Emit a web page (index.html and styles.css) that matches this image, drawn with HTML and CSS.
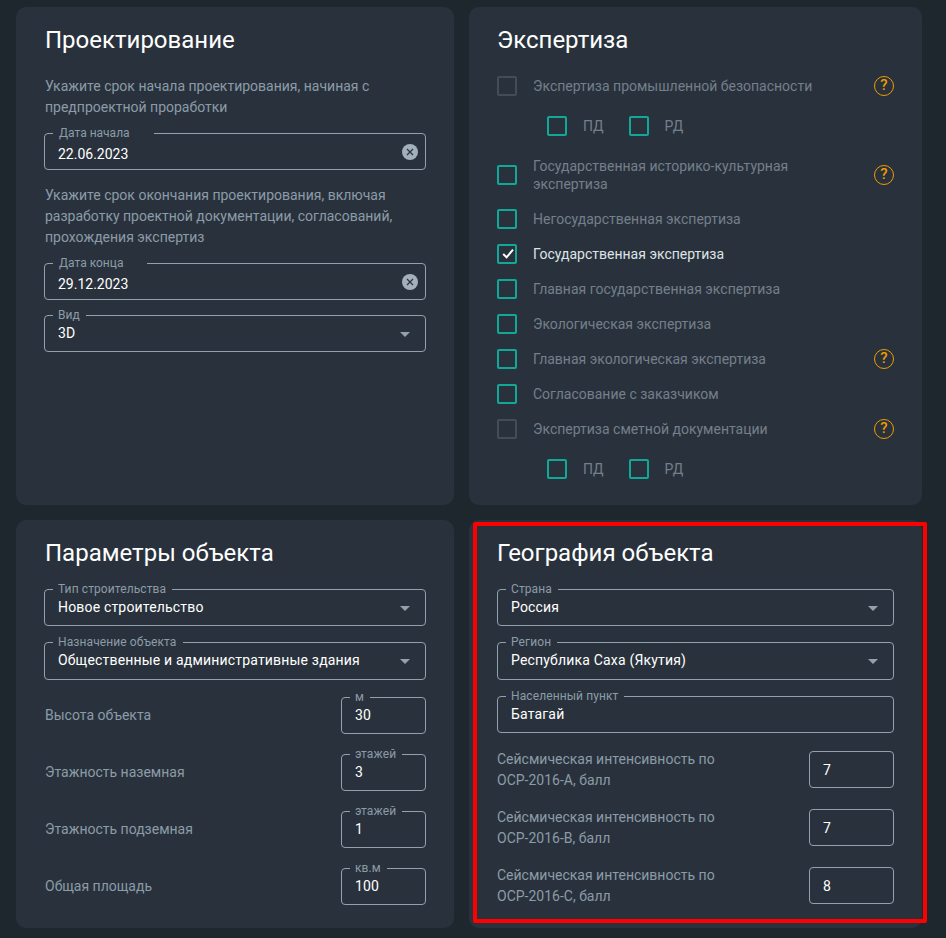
FILE: index.html
```html
<!DOCTYPE html>
<html lang="ru">
<head>
    <meta charset="UTF-8">
    <meta name="viewport" content="width=device-width, initial-scale=1.0">
    <title>Параметры проекта</title>
    <link rel="stylesheet" href="styles.css">
</head>
<body>
    <div class="page">
        <section class="card card-left">
            <h2>Проектирование</h2>
            <p class="hint hint-first">Укажите срок начала проектирования, начиная с предпроектной проработки</p>
            <fieldset class="field field-date">
                <legend>Дата начала</legend>
                <div class="value">
                    <span>22.06.2023</span>
                    <svg class="clear" width="16" height="16" viewBox="0 0 16 16"><circle cx="8" cy="8" r="8" fill="#a3b0bb"/><path d="M5 5l6 6M11 5l-6 6" stroke="#29323c" stroke-width="1.2" fill="none"/></svg>
                </div>
            </fieldset>
            <p class="hint hint-second">Укажите срок окончания проектирования, включая разработку проектной документации, согласований, прохождения экспертиз</p>
            <fieldset class="field field-date">
                <legend>Дата конца</legend>
                <div class="value">
                    <span>29.12.2023</span>
                    <svg class="clear" width="16" height="16" viewBox="0 0 16 16"><circle cx="8" cy="8" r="8" fill="#a3b0bb"/><path d="M5 5l6 6M11 5l-6 6" stroke="#29323c" stroke-width="1.2" fill="none"/></svg>
                </div>
            </fieldset>
            <fieldset class="field field-next">
                <legend>Вид</legend>
                <div class="value">
                    <span>3D</span>
                    <svg class="arrow" width="10" height="5" viewBox="0 0 10 5"><path d="M0 0h10L5 5z"/></svg>
                </div>
            </fieldset>
        </section>

        <section class="card">
            <h2>Экспертиза</h2>
            <div class="checks">
                <div class="check-row">
                    <span class="box box-off"></span>
                    <span class="check-label">Экспертиза промышленной безопасности</span>
                    <span class="help">?</span>
                </div>
                <div class="check-sub">
                    <span class="box"></span><span class="check-label">ПД</span>
                    <span class="box"></span><span class="check-label">РД</span>
                </div>
                <div class="check-row check-tall">
                    <span class="box"></span>
                    <span class="check-label">Государственная историко-культурная экспертиза</span>
                    <span class="help">?</span>
                </div>
                <div class="check-row">
                    <span class="box"></span>
                    <span class="check-label">Негосударственная экспертиза</span>
                </div>
                <div class="check-row">
                    <span class="box"><svg width="16" height="16" viewBox="0 0 16 16"><path d="M4.2 8l3.4 3.3 6.4-7.6" stroke="#fff" stroke-width="2" fill="none"/></svg></span>
                    <span class="check-label check-on">Государственная экспертиза</span>
                </div>
                <div class="check-row">
                    <span class="box"></span>
                    <span class="check-label">Главная государственная экспертиза</span>
                </div>
                <div class="check-row">
                    <span class="box"></span>
                    <span class="check-label">Экологическая экспертиза</span>
                </div>
                <div class="check-row">
                    <span class="box"></span>
                    <span class="check-label">Главная экологическая экспертиза</span>
                    <span class="help">?</span>
                </div>
                <div class="check-row">
                    <span class="box"></span>
                    <span class="check-label">Согласование с заказчиком</span>
                </div>
                <div class="check-row">
                    <span class="box box-off"></span>
                    <span class="check-label">Экспертиза сметной документации</span>
                    <span class="help">?</span>
                </div>
                <div class="check-sub">
                    <span class="box"></span><span class="check-label">ПД</span>
                    <span class="box"></span><span class="check-label">РД</span>
                </div>
            </div>
        </section>

        <section class="card card-left">
            <h2>Параметры объекта</h2>
            <fieldset class="field field-top">
                <legend>Тип строительства</legend>
                <div class="value">
                    <span>Новое строительство</span>
                    <svg class="arrow" width="10" height="5" viewBox="0 0 10 5"><path d="M0 0h10L5 5z"/></svg>
                </div>
            </fieldset>
            <fieldset class="field field-gap field-wide">
                <legend>Назначение объекта</legend>
                <div class="value">
                    <span>Общественные и административные здания</span>
                    <svg class="arrow" width="10" height="5" viewBox="0 0 10 5"><path d="M0 0h10L5 5z"/></svg>
                </div>
            </fieldset>
            <div class="params">
                <div class="param">
                    <span class="param-label">Высота объекта</span>
                    <fieldset class="field field-small"><legend>м</legend><div class="value">30</div></fieldset>
                </div>
                <div class="param">
                    <span class="param-label">Этажность наземная</span>
                    <fieldset class="field field-small"><legend>этажей</legend><div class="value">3</div></fieldset>
                </div>
                <div class="param">
                    <span class="param-label">Этажность подземная</span>
                    <fieldset class="field field-small"><legend>этажей</legend><div class="value">1</div></fieldset>
                </div>
                <div class="param">
                    <span class="param-label">Общая площадь</span>
                    <fieldset class="field field-small"><legend>кв.м</legend><div class="value">100</div></fieldset>
                </div>
            </div>
        </section>

        <section class="card card-geo">
            <h2>География объекта</h2>
            <fieldset class="field field-top">
                <legend>Страна</legend>
                <div class="value">
                    <span>Россия</span>
                    <svg class="arrow" width="10" height="5" viewBox="0 0 10 5"><path d="M0 0h10L5 5z"/></svg>
                </div>
            </fieldset>
            <fieldset class="field field-gap field-wide">
                <legend>Регион</legend>
                <div class="value">
                    <span>Республика Саха (Якутия)</span>
                    <svg class="arrow" width="10" height="5" viewBox="0 0 10 5"><path d="M0 0h10L5 5z"/></svg>
                </div>
            </fieldset>
            <fieldset class="field field-gap">
                <legend>Населенный пункт</legend>
                <div class="value">Батагай</div>
            </fieldset>
            <div class="seismic">
                <div class="seismic-row">
                    <span class="seismic-label">Сейсмическая интенсивность по ОСР-2016-А, балл</span>
                    <div class="plain-input">7</div>
                </div>
                <div class="seismic-row">
                    <span class="seismic-label">Сейсмическая интенсивность по ОСР-2016-В, балл</span>
                    <div class="plain-input">7</div>
                </div>
                <div class="seismic-row">
                    <span class="seismic-label">Сейсмическая интенсивность по ОСР-2016-С, балл</span>
                    <div class="plain-input">8</div>
                </div>
            </div>
            <div class="highlight"></div>
        </section>
    </div>
</body>
</html>
```

FILE: styles.css
```css
body {
    margin: 0;
    background: #1e272e;
    font-family: Roboto, "Liberation Sans", sans-serif;
    font-size: 14px;
    color: #fff;
}
.page {
    display: grid;
    grid-template-columns: 438px 453px;
    grid-template-rows: 498px 408px;
    gap: 15px;
    padding: 7px 24px 10px 16px;
}
.card {
    position: relative;
    padding: 18px 28px 0;
    background: #29323c;
    border-radius: 10px;
}
h2 {
    margin: 0;
    padding-top: 2px;
    font-size: 24px;
    font-weight: 400;
    line-height: 26px;
}
.card-left h2,
.card-left .hint,
.card-left .param-label {
    margin-left: 1px;
}
.hint {
    margin: 0;
    color: #8c9ba8;
    line-height: 21px;
}
.card-left .hint-first {
    margin-top: 23px;
    margin-bottom: 8px;
}
.card-left .hint-second {
    margin-top: 15px;
    margin-bottom: 8px;
}

/* Outlined fields */
.field {
    margin: 0;
    padding: 0 8px;
    min-width: 0;
    border: 1px solid #93a1ae;
    border-radius: 4px;
    height: 44px;
    box-sizing: border-box;
}
.field legend {
    padding: 0 6px 0 5px;
    color: #8c9ba8;
    font-size: 12px;
    line-height: 14px;
    letter-spacing: 0.1px;
}
.field-top {
    margin-top: 16px;
}
.field-next {
    margin-top: 8px;
}
.field-gap {
    margin-top: 9px;
}
.field-wide {
    height: 45px;
}
.field-date legend {
    padding: 0 24px 0 6px;
    letter-spacing: 0;
}
.value {
    display: flex;
    justify-content: space-between;
    align-items: center;
    padding: 2px 5px 0;
    line-height: 18px;
    letter-spacing: 0.18px;
}
.field-date .value {
    padding-top: 5px;
    letter-spacing: 0;
}
.clear {
    margin: -4px -6px 0 0;
}
.arrow {
    margin: 2px 2px 0 0;
    fill: #93a1ae;
}

/* Checkbox list */
.checks {
    display: flex;
    flex-direction: column;
    gap: 1px;
    margin-top: 16px;
}
.check-row {
    display: flex;
    align-items: center;
    gap: 16px;
    height: 34px;
}
.check-tall {
    height: 36px;
    margin-bottom: 8px;
}
.check-sub {
    display: flex;
    align-items: center;
    gap: 16px;
    height: 34px;
    margin: 5px 0 13px;
    padding-left: 50px;
}
.check-sub .check-label {
    flex: none;
    margin-right: 9px;
}
.box {
    flex: none;
    width: 20px;
    height: 20px;
    box-sizing: border-box;
    border: 2px solid #11a898;
    border-radius: 2px;
}
.box svg {
    display: block;
}
.box-off {
    border-color: #434d58;
}
.check-label {
    flex: 1;
    max-width: 320px;
    color: #747f8b;
    line-height: 18px;
}
.check-on {
    color: #dfe3e7;
}
.help {
    flex: none;
    margin-left: auto;
    width: 20px;
    height: 20px;
    box-sizing: border-box;
    border: 1.5px solid #f09c00;
    border-radius: 50%;
    color: #f09c00;
    font-weight: 500;
    font-size: 15px;
    line-height: 17px;
    text-align: center;
}

/* Number rows */
.params {
    display: flex;
    flex-direction: column;
    gap: 13px;
    margin-top: 10px;
}
.param {
    display: flex;
    justify-content: space-between;
    align-items: center;
}
.param-label {
    padding-top: 5px;
    color: #8c9ba8;
}
.field-small {
    width: 85px;
}
.seismic {
    display: flex;
    flex-direction: column;
    gap: 16px;
    margin-top: 16px;
}
.seismic-row {
    display: flex;
    justify-content: space-between;
    align-items: center;
}
.seismic-label {
    max-width: 240px;
    color: #8c9ba8;
    line-height: 21px;
}
.plain-input {
    width: 85px;
    height: 37px;
    margin-bottom: 1px;
    box-sizing: border-box;
    padding-left: 13px;
    border: 1px solid #93a1ae;
    border-radius: 4px;
    letter-spacing: 0.18px;
    line-height: 36px;
}
.highlight {
    position: absolute;
    left: 4px;
    top: 2px;
    width: 454px;
    height: 401px;
    box-sizing: border-box;
    border: 4px solid #f00;
    border-radius: 2px;
}
```
